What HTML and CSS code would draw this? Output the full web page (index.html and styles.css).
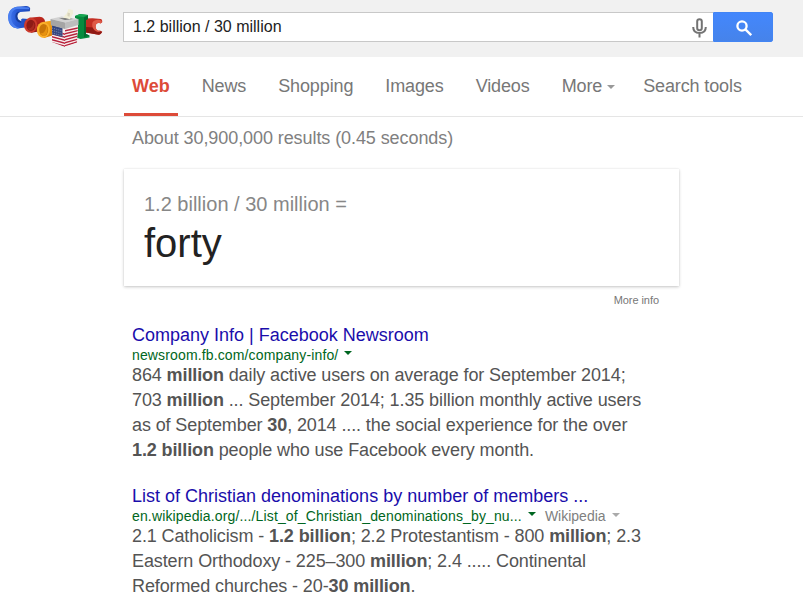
FILE: index.html
```html
<!DOCTYPE html>
<html lang="en">
<head>
<meta charset="utf-8">
<title>1.2 billion / 30 million - Google Search</title>
<link rel="stylesheet" href="styles.css">
</head>
<body>
<header class="top">
  <svg class="logo" viewBox="0 0 120 57" role="img" aria-label="Google">
    <defs>
      <linearGradient id="blue" x2="1"><stop stop-color="#4478ee"/><stop offset=".35" stop-color="#2a5cd8"/><stop offset="1" stop-color="#1a45b4"/></linearGradient>
      <linearGradient id="red" x2="0" y2="1"><stop stop-color="#c02a20"/><stop offset="1" stop-color="#8c1511"/></linearGradient>
      <linearGradient id="gold" x2="0" y2="1"><stop stop-color="#f5a51b"/><stop offset="1" stop-color="#d97c05"/></linearGradient>
      <clipPath id="left"><path d="M52 25l13 3.500v18.500l-13-5z"/></clipPath>
      <clipPath id="right"><path d="M65 28.500l13-3-1 17-12 4.500z"/></clipPath>
    </defs>
    <path fill="url(#blue)" d="M17 6.800L26 6c2.500.3 3.700 1.200 4.200 2.500l-.4 2.800-9.600.7c-2 .5-3 2.400-2.900 4.600.3 2.800 1.700 4.200 4 4.600l-.3-1.700 1.500-1 8.300.8-.3 7.500-13 1.600c-5.500-.3-9-4.500-9.300-10.600C8 11.500 11.500 7.500 17 6.800z"/>
    <path fill="#4a7ff0" d="M17 6.800c-5.700.9-9 5-8.800 11 .3 6.100 3.800 10.300 9.300 10.600l2.500-.3c-5-1-8.500-4.800-8.800-10C11 13 13 9.500 17 9l12.500.2-.7-1.700L22 7z"/>
    <path fill="#173d9c" d="M20.200 12c-2 .5-3 2.400-2.900 4.600.3 2.800 1.700 4.200 4 4.600l-.1 1.600c-3.500-.4-5.600-2.400-5.800-6-.2-2.700 1-4.600 3-5.100z"/>
    <path fill="url(#red)" d="M29 17.800l10.500-1c4 .2 5.800 3 5.800 7s-1.800 6.500-4.800 7.400L31 32.800z"/>
    <ellipse cx="30.700" cy="25.300" rx="6.700" ry="7.500" fill="#cd3a2c"/>
    <ellipse cx="30.900" cy="25.400" rx="4.500" ry="5.600" fill="#8e1b16"/>
    <path fill="#a92a20" d="M33.500 22c1.700 3 1 6.500-1.500 8.300-2 .5-3.500-.5-4.300-2 3.500.8 5.500-2.300 5.800-6.300z"/>
    <path fill="url(#gold)" d="M42.500 22l8.500-1.200 4 2v12L44 38z"/>
    <ellipse cx="43.400" cy="29.900" rx="6.600" ry="8" fill="#fbb02a"/>
    <ellipse cx="43.700" cy="30" rx="4.500" ry="6" fill="#c87508"/>
    <path fill="#e8930f" d="M46.500 25.500c1.800 3.500 1.300 8-1.500 10.300-2 .4-3.800-.7-4.500-2.500 3.800.5 5.500-3.300 6-7.800z"/>
    <path fill="#c42f24" d="M86 18.500l6.500-.3 8.500.7c1 .6 1.500 2 1.200 3.400l-1.700 1.200c-3-1.300-4.900.3-4.900 3 0 3.200 2 4.700 4.400 4l2.200 1.200c-.6 1.600-1.800 2.700-3.700 3L86 32.500z"/>
    <path fill="#8f1914" d="M86 27l8 .5c.7 2.800 2.700 4.300 6 4l2.200.2c-.6 1.600-1.800 2.700-3.700 3L86 32.500z"/>
    <path fill="#e05b48" d="M92.500 22.500c2-2.700 5.500-3.700 9.500-1.600l-1.500 2.600c-3-1.300-4.900.3-4.900 3 0 3.200 2 4.700 4.400 4l-.3 1.200c-4.200.9-8.700-3.500-7.200-9.200z"/>
    <path fill="#078b3e" d="M75 16l5-2 8 1v4l-2 1v14l3.500 1.500v2l-9 1.500-6-2V35l3.500-1V19.500L75 18z"/>
    <path fill="#18a853" d="M75 16l5-2 8 1-4.500 2z"/>
    <path fill="#056b30" d="M84 17.500l4-2V19l-2 1v14l3.500 1.500-5.500 1.800z"/>
    <g clip-path="url(#left)"><path fill="#f5eeee" d="M51 24h15v24H51z"/><path stroke="#b8203b" stroke-width="1.300" d="M51 30.500l15 4M51 33.500l15 4M51 36.500l15 4M51 39.500l15 4M51 42.500l15 4"/><path fill="#354780" d="M52 25l10.500 2.800V37L52 34.500z"/><path stroke="#aeb8d3" stroke-width=".6" stroke-dasharray="1 1" d="M52 28l11 3M52 30.500l11 3M52 33l11 3"/></g>
    <g clip-path="url(#right)"><path fill="#f8eeee" d="M64 25h14v23H64z"/><path stroke="#b8233c" stroke-width="1.300" d="M64 31l14-3M64 34l14-3.300M64 37l14-3.500M64 40l14-3.800M64 43l14-4M64 46l14-4.300"/></g>
    <path fill="#d2d2d2" d="M50.500 19l11-2.500 17 2.500-13.500 3.500z"/>
    <path fill="#a5a5a5" d="M50.500 19L65 22.500V29l-14-3.700z"/>
    <path fill="#bdbdbd" d="M65 22.500L78.500 19v6L65 29z"/>
    <path fill="#777" d="M59 18.300l8-.2 6 1-8 1z"/>
    <path fill="#f0eed7" d="M63 17.500l4-4.500 1.500-4 4.300 1 .3 3.500L70 19.200z"/>
    <path fill="#d7d2ba" d="M67.500 12.500l2.500.7-.5 3.500-2-.6z"/>
  </svg>
  <form class="search" role="search">
    <div class="query">
      <span>1.2 billion / 30 million</span>
      <svg class="mic" viewBox="0 0 15 20"><rect x="5.200" y="1.200" width="4.600" height="11" rx="2.300"/><path d="M1.200 9c0 3.900 2.500 6 6.300 6s6.300-2.100 6.300-6M7.500 15v4.500"/></svg>
    </div>
    <button class="go" type="button" aria-label="Search"><svg viewBox="0 0 16 16"><circle cx="6" cy="6" r="4.600"/><path d="M9.400 9.400l5.800 5.800"/></svg></button>
  </form>
</header>
<nav class="tabs">
  <a class="tab tab-on">Web</a>
  <a class="tab">News</a>
  <a class="tab">Shopping</a>
  <a class="tab">Images</a>
  <a class="tab">Videos</a>
  <a class="tab">More<i class="caret caret-more"></i></a>
  <a class="tab">Search tools</a>
</nav>
<main>
  <p class="stats">About 30,900,000 results (0.45 seconds)</p>
  <section class="card">
    <div class="expression">1.2 billion / 30 million =</div>
    <div class="answer">forty</div>
  </section>
  <div class="info">More info</div>
  <article class="result">
    <h3>Company Info | Facebook Newsroom</h3>
    <div class="url"><cite>newsroom.fb.com/company-info/</cite><i class="caret green"></i></div>
    <p>864 <b>million</b> daily active users on average for September 2014;<br>703 <b>million</b> ... September 2014; 1.35 billion monthly active users<br>as of September <b>30</b>, 2014 .... the social experience for the over<br><b>1.2 billion</b> people who use Facebook every month.</p>
  </article>
  <article class="result">
    <h3>List of Christian denominations by number of members ...</h3>
    <div class="url"><cite>en.wikipedia.org/.../List_of_Christian_denominations_by_nu...</cite><i class="caret green"></i><span class="source">Wikipedia</span><i class="caret grey"></i></div>
    <p>2.1 Catholicism - <b>1.2 billion</b>; 2.2 Protestantism - 800 <b>million</b>; 2.3<br>Eastern Orthodoxy - 225–300 <b>million</b>; 2.4 ..... Continental<br>Reformed churches - 20-<b>30 million</b>.</p>
  </article>
</main>
</body>
</html>
```
FILE: styles.css
```css
* { box-sizing: border-box; }
body { margin: 0; height: 607px; overflow: hidden; background: #fff; font-family: "Liberation Sans", Arial, sans-serif; color: #545454; }
.top { display: flex; height: 57px; background: #f1f1f1; }
.logo { width: 120px; height: 57px; margin-right: 3px; flex: none; }
.search { display: flex; width: 650px; height: 30px; margin-top: 12px; }
.query { display: flex; align-items: center; justify-content: space-between; width: 590px; padding: 0 6px 0 9px; border: 1px solid #c8c8c8; border-right: 0; background: #fff; color: #222; font-size: 16px; }
.mic { width: 15px; height: 20px; margin-top: 1px; fill: none; stroke: #737373; stroke-width: 2; }
.go { display: flex; align-items: center; justify-content: center; width: 60px; padding: 0 0 0 1px; border: 1px solid #4285f4; border-radius: 0 2px 2px 0; background: linear-gradient(#4387fd, #4683ea); }
.go svg { width: 16px; height: 16px; margin-top: 1px; fill: none; stroke: #fff; stroke-width: 2.3; }
.tabs { display: flex; height: 60px; padding-left: 124px; gap: 16px; border-bottom: 1px solid #e5e5e5; }
.tab { display: flex; align-items: center; height: 59px; padding: 0 8px; color: #777; font-size: 18px; letter-spacing: -.12px; white-space: nowrap; }
.tab-on { border-bottom: 3px solid #dd4b39; padding-top: 3px; color: #dd4b39; font-weight: bold; letter-spacing: 0; }
.caret { border: 4px solid transparent; border-top-color: currentColor; border-bottom: 0; }
.caret-more { margin: 0 -4px 0 5px; color: #999; }
main { padding-left: 132px; }
.stats { margin: 11px 0 0; height: 20px; line-height: 20px; font-size: 18px; letter-spacing: -.08px; color: #808080; }
.card { width: 555px; height: 117px; margin: 21px 0 0 -8px; padding: 22px 20px; background: #fff; box-shadow: 0 1px 3px rgba(0,0,0,.22), 0 0 1px rgba(0,0,0,.1); }
.expression { line-height: 26px; font-size: 20px; color: #878787; }
.answer { line-height: 52px; font-size: 40px; color: #222; }
.info { width: 527px; margin-top: 7px; line-height: 14px; font-size: 11px; letter-spacing: -.06px; text-align: right; color: #777; }
.result { height: 161px; }
.result + .result { height: 111px; }
.info + .result { margin-top: 18px; }
h3 { margin: 0; line-height: 20px; font-size: 18px; font-weight: normal; color: #1a0dab; white-space: nowrap; }
.url { display: flex; align-items: center; height: 20px; margin-bottom: -2px; font-size: 14px; white-space: nowrap; }
cite { font-style: normal; letter-spacing: .14px; color: #006621; }
.green { margin: -4px 0 0 6px; color: #006621; }
.source { margin-left: 9px; color: #808080; }
.grey { margin: -3px 0 0 6px; color: #aaa; }
.result p { margin: 0; line-height: 25px; font-size: 18px; letter-spacing: -.11px; white-space: nowrap; }
```
